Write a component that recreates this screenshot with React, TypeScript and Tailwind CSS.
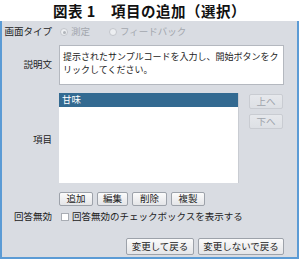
import React from 'react';

const font = { fontFamily: '"Noto Sans CJK JP", "Noto Sans", sans-serif' };

function Btn({ label, w, disabled }: { label: string; w: string; disabled?: boolean }) {
  return (
    <div
      className={`${w} flex items-center justify-center rounded-[2px] border bg-gradient-to-b ${
        disabled
          ? 'border-[#c9ccd2] from-[#e6e8ec] to-[#dde0e5] text-[#9ea3ab]'
          : 'border-[#9da2aa] from-[#fbfbfb] to-[#e4e5e8] text-[#222]'
      }`}
    >
      {label}
    </div>
  );
}

export default function App() {
  return (
    <div className="flex h-[259px] w-[299px] flex-col bg-white text-[9.5px] leading-none" style={font}>
      <div className="flex h-[21px] items-center justify-center pt-[1px] text-[14.5px] font-bold tracking-[0.5px] text-[#111]">
        図表 1　項目の追加（選択）
      </div>
      <div className="flex h-[238px] flex-col border-x-2 border-b-2 border-[#5b9bd5] bg-[#d9dce2] pr-[13px]">
        <div className="flex h-[22px] items-center">
          <div className="w-[50px] text-right text-[#222]">画面タイプ</div>
          <div className="ml-[8px] flex items-center text-[#a3a7ae]">
            <span className="flex h-[8px] w-[8px] items-center justify-center rounded-full border border-[#c3c6cc] bg-[#eceef1]">
              <span className="h-[3px] w-[3px] rounded-full bg-[#b0b4ba]" />
            </span>
            <span className="ml-[3px]">測定</span>
            <span className="ml-[19px] h-[8px] w-[8px] rounded-full border border-[#c3c6cc] bg-[#eceef1]" />
            <span className="ml-[3px]">フィードバック</span>
          </div>
        </div>
        <div className="mt-[2px] flex h-[40px]">
          <div className="flex w-[50px] items-center justify-end text-[#222]">説明文</div>
          <div className="ml-[7px] flex-1 border border-[#b4b8bf] bg-white pl-[3px] pr-[1px] pt-[4px] text-[9px] leading-[13px] text-[#222]">
            提示されたサンプルコードを入力し、開始ボタンをクリックしてください。
          </div>
        </div>
        <div className="mt-[8px] flex h-[90px]">
          <div className="flex w-[50px] items-center justify-end pt-[4px] text-[#222]">項目</div>
          <div className="ml-[7px] w-[180px] border-r border-[#c9ccd2] bg-white">
            <div className="flex h-[14px] items-center bg-[#336a91] pl-[3px] text-white">甘味</div>
          </div>
          <div className="ml-[10px] flex flex-col pt-[1px]">
            <div className="flex h-[15px]">
              <Btn label="上へ" w="w-[34px]" disabled />
            </div>
            <div className="mt-[5px] flex h-[15px]">
              <Btn label="下へ" w="w-[34px]" disabled />
            </div>
          </div>
        </div>
        <div className="mt-[9px] flex h-[14px] gap-[4px] pl-[57px]">
          <Btn label="追加" w="w-[34px]" />
          <Btn label="編集" w="w-[31px]" />
          <Btn label="削除" w="w-[35px]" />
          <Btn label="複製" w="w-[34px]" />
        </div>
        <div className="mt-[5px] flex h-[12px] items-center">
          <div className="w-[50px] text-right text-[#222]">回答無効</div>
          <span className="ml-[9px] h-[8px] w-[8px] border border-[#a9adb4] bg-white" />
          <span className="ml-[3px] text-[#222]">回答無効のチェックボックスを表示する</span>
        </div>
        <div className="mt-[15px] flex h-[17px] justify-end gap-[4px]">
          <Btn label="変更して戻る" w="w-[68px]" />
          <Btn label="変更しないで戻る" w="w-[86px]" />
        </div>
      </div>
    </div>
  );
}
